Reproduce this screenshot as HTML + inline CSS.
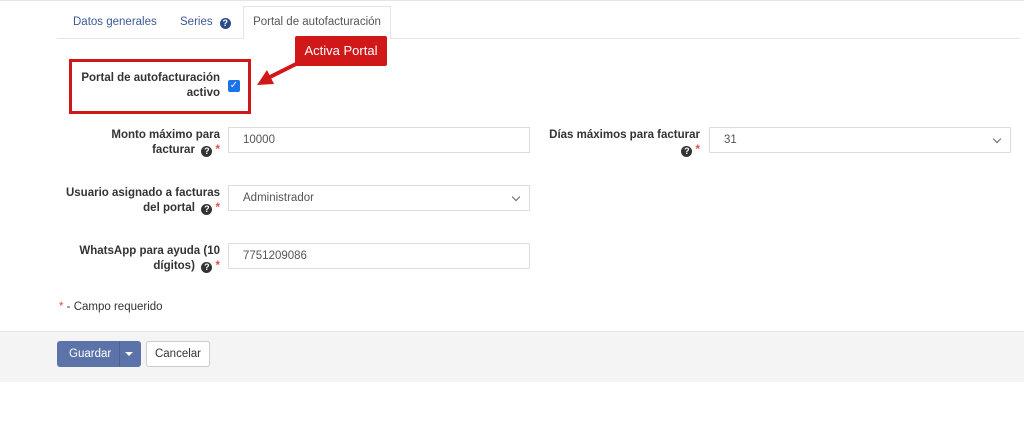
<!DOCTYPE html>
<html><head><meta charset="utf-8"><style>
body{margin:0;width:1024px;height:422px;background:#fff;font-family:"Liberation Sans",sans-serif;font-size:11.5px;color:#333;position:relative;overflow:hidden}
.a{position:absolute}
.lbl{font-weight:bold;text-align:right;line-height:15px;color:#333;font-size:11.5px;white-space:nowrap}
.inp{border:1px solid #ddd;background:#fff;height:26px;box-sizing:border-box;padding:0 14px;line-height:25px;color:#555;font-size:11.5px}
.q{display:inline-block;width:11px;height:11px;border-radius:50%;background:#333;color:#fff;font-size:9px;line-height:11px;text-align:center;font-weight:bold;vertical-align:-1px}
.s{color:#d9534f;font-weight:bold}
.chev{position:absolute;right:10px;top:8px;width:5px;height:5px;border-right:1px solid #666;border-bottom:1px solid #666;transform:rotate(45deg)}
</style></head><body>
<div class="a" style="left:0;top:0;width:1024px;height:1px;background:#e5e5e5"></div>
<div class="a" style="left:57px;top:38px;width:963px;height:1px;background:#e5e5e5"></div>
<div class="a" style="left:73px;top:16px;color:#3b5998">Datos generales</div>
<div class="a" style="left:180px;top:16px;color:#3b5998">Series <span class="q" style="background:#2a4a8a;margin-left:4px">?</span></div>
<div class="a" style="left:243px;top:6px;width:148px;height:33px;border:1px solid #e5e5e5;border-bottom:none;background:#fff;box-sizing:border-box;text-align:center;line-height:31px;color:#555">Portal de autofacturación</div>
<div class="a" style="left:69px;top:59px;width:182px;height:55px;border:3px solid #d01818;box-sizing:border-box"></div>
<div class="a lbl" style="left:70px;top:71px;width:150px">Portal de autofacturación<br>activo</div>
<div class="a" style="left:228px;top:80px;width:12px;height:12px;background:#1a73e8;border-radius:2px;color:#fff;font-size:10px;line-height:12px;text-align:center">✓</div>
<div class="a" style="left:295px;top:36px;width:92px;height:30px;background:#d01818;border-radius:2px;color:#fff;font-size:13px;line-height:30px;text-align:center">Activa Portal</div>
<svg class="a" style="left:250px;top:55px" width="60" height="40"><path d="M46 9 L18 23" stroke="#d01818" stroke-width="4"/><path d="M7 30 L17 15 L24 29 Z" fill="#d01818"/></svg>
<div class="a lbl" style="left:70px;top:128px;width:150px">Monto máximo para<br>facturar &nbsp;<span class="q">?</span> <span class="s">*</span></div>
<div class="a inp" style="left:228px;top:127px;width:302px">10000</div>
<div class="a lbl" style="left:540px;top:128px;width:160px">Días máximos para facturar<br><span class="q">?</span> <span class="s">*</span></div>
<div class="a inp" style="left:709px;top:127px;width:302px">31<span class="chev"></span></div>
<div class="a lbl" style="left:60px;top:186px;width:160px">Usuario asignado a facturas<br>del portal &nbsp;<span class="q">?</span> <span class="s">*</span></div>
<div class="a inp" style="left:228px;top:185px;width:302px">Administrador<span class="chev"></span></div>
<div class="a lbl" style="left:60px;top:244px;width:160px">WhatsApp para ayuda (10<br>dígitos) &nbsp;<span class="q">?</span> <span class="s">*</span></div>
<div class="a inp" style="left:228px;top:243px;width:302px">7751209086</div>
<div class="a" style="left:59px;top:301px"><span style="color:#d9534f">*</span> - Campo requerido</div>
<div class="a" style="left:0;top:331px;width:1024px;height:50px;background:#f4f4f4;border-top:1px solid #e8e8e8"></div>
<div class="a" style="left:57px;top:341px;width:84px;height:26px;background:#5b73a8;border-radius:3px;color:#fff;line-height:26px"><span style="margin-left:12px">Guardar</span><span style="position:absolute;left:62px;top:0;width:1px;height:26px;background:#4a6296"></span><span style="position:absolute;left:68px;top:11px;border:4px solid transparent;border-top:4px solid #fff"></span></div>
<div class="a" style="left:146px;top:341px;width:64px;height:26px;background:#fff;border:1px solid #ccc;box-sizing:border-box;border-radius:3px;text-align:center;line-height:24px">Cancelar</div>
</body></html>
